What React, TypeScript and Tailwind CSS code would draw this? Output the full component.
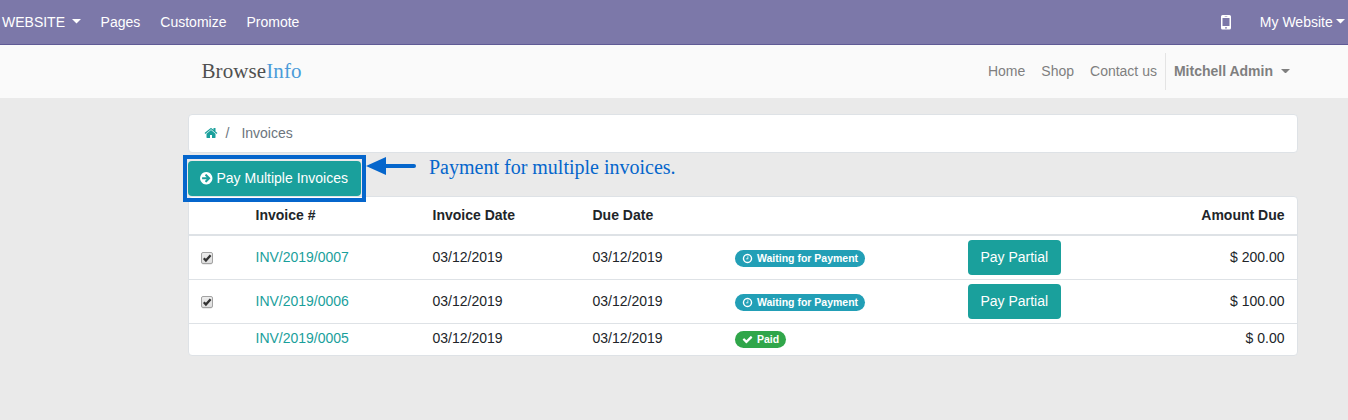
import React from "react";

const PATHS = {
  home: "M1472 992v480q0 26-19 45t-45 19h-384v-384h-256v384h-384q-26 0-45-19t-19-45v-480q0-1 .5-3t.5-3l575-474 575 474q1 2 1 6zm223-69l-62 74q-8 9-21 11h-3q-13 0-21-7l-692-577-692 577q-12 8-24 7-13-2-21-11l-62-74q-8-10-7-23.5t11-21.5l719-599q32-26 76-26t76 26l244 204v-195q0-14 9-23t23-9h192q14 0 23 9t9 23v408l219 182q10 8 11 21.5t-7 23.5z",
  arrow: "M1413 896q0-27-18-45l-91-91-362-362q-18-18-45-18t-45 18l-91 91q-18 18-18 45t18 45l189 189h-502q-26 0-45 19t-19 45v128q0 26 19 45t45 19h502l-189 189q-18 18-18 45t18 45l91 91q18 18 45 18t45-18l362-362 91-91q18-18 18-45zm251 0q0 209-103 385.5t-279.5 279.5-385.5 103-385.5-103-279.5-279.5-103-385.5 103-385.5 279.5-279.5 385.5-103 385.5 103 279.5 279.5 103 385.5z",
  clock: "M1024 544v448q0 14-9 23t-23 9h-320q-14 0-23-9t-9-23v-64q0-14 9-23t23-9h224v-352q0-14 9-23t23-9h64q14 0 23 9t9 23zm416 352q0-148-73-273t-198-198-273-73-273 73-198 198-73 273 73 273 198 198 273 73 273-73 198-198 73-273zm224 0q0 209-103 385.5t-279.5 279.5-385.5 103-385.5-103-279.5-279.5-103-385.5 103-385.5 279.5-279.5 385.5-103 385.5 103 279.5 279.5 103 385.5z",
  check: "M1671 566q0 40-28 68l-724 724-136 136q-28 28-68 28t-68-28l-136-136-362-362q-28-28-28-68t28-68l136-136q28-28 68-28t68 28l294 295 656-657q28-28 68-28t68 28l136 136q28 28 28 68z",
};

function Icon({ name, className }: { name: keyof typeof PATHS; className: string }) {
  return (
    <svg viewBox="0 0 1792 1792" fill="currentColor" className={`shrink-0 ${className}`}>
      <path d={PATHS[name]} />
    </svg>
  );
}

function Caret({ className = "" }: { className?: string }) {
  return (
    <svg viewBox="0 0 9 4.5" fill="currentColor" className={`mb-[1.5px] h-[4.5px] w-[9px] shrink-0 ${className}`}>
      <path d="M0 0h9L4.5 4.5z" />
    </svg>
  );
}

function Checkbox() {
  return (
    <svg viewBox="0 0 13 14" className="mt-[3px] h-[14px] w-[13px]">
      <defs>
        <linearGradient id="box" x1="0" y1="0" x2="0" y2="1">
          <stop offset="0" stopColor="#ededed" />
          <stop offset="1" stopColor="#dedede" />
        </linearGradient>
      </defs>
      <rect x="0.5" y="1.2" width="11" height="11" rx="2" fill="none" stroke="#000" strokeOpacity="0.12" />
      <rect x="0.5" y="0.5" width="11" height="11" rx="1.5" fill="url(#box)" stroke="#a3a3a3" />
      <path d="M2.8 6.3L4.9 8.6L9.6 3.2" fill="none" stroke="#333" strokeWidth="2.3" />
    </svg>
  );
}

const GRID = "grid grid-cols-[54.5px_177px_160px_142.5px_233px_1fr_140px]";

type Invoice = { id: string; amount: string; paid?: boolean };

const INVOICES: Invoice[] = [
  { id: "INV/2019/0007", amount: "$ 200.00" },
  { id: "INV/2019/0006", amount: "$ 100.00" },
  { id: "INV/2019/0005", amount: "$ 0.00", paid: true },
];

function Row({ id, amount, paid }: Invoice) {
  return (
    <div className={`${GRID} items-center ${paid ? "h-[31px] pb-[2px]" : "h-[44px] border-b border-[#dee2e6]"}`}>
      <div className="pl-3">{!paid && <Checkbox />}</div>
      <div className="pl-3 text-[#1aa09c]">{id}</div>
      <div className="pl-3">03/12/2019</div>
      <div className="pl-3">03/12/2019</div>
      <div className="flex pl-3">
        <span
          className={`mt-[2px] flex h-[17px] items-center gap-[4px] rounded-full pl-[7px] pr-[6.5px] text-[10.5px] font-bold text-white ${
            paid ? "bg-[#30a64a]" : "bg-[#229fb6]"
          }`}
        >
          <Icon name={paid ? "check" : "clock"} className="size-[11px]" />
          {paid ? "Paid" : "Waiting for Payment"}
        </span>
      </div>
      <div className="pl-3">
        {!paid && (
          <button className="block h-[35px] w-[93px] rounded-[4px] bg-[#1aa09c] pr-[0.5px] text-center text-white">Pay Partial</button>
        )}
      </div>
      <div className="pr-[12.5px] text-right">{amount}</div>
    </div>
  );
}

export default function App() {
  return (
    <div className="h-[420px] w-[1348px] overflow-hidden bg-[#eaeaea] font-['Liberation_Sans',Arial,sans-serif] text-[14px] leading-[21px] text-[#212529]">
      <nav className="flex h-[45px] items-center border-b border-[#5f5a95] bg-[#7c78a9] pl-[2px] text-white">
        <span>WEBSITE</span>
        <Caret className="ml-[7px]" />
        <span className="ml-[19.6px]">Pages</span>
        <span className="ml-[20px]">Customize</span>
        <span className="ml-[20px]">Promote</span>
        <svg viewBox="0 0 10 15" className="ml-auto mr-[29px] h-[15px] w-[10px]">
          <path
            fill="currentColor"
            fillRule="evenodd"
            d="M1.6 0h6.8A1.6 1.6 0 0 1 10 1.6v11.3a1.6 1.6 0 0 1-1.6 1.6H1.6A1.6 1.6 0 0 1 0 12.9V1.6A1.6 1.6 0 0 1 1.6 0zM1.5 3v8h7V3zM3.7 1.2v.6h2.6v-.6zM5 11.9a.9.9 0 1 0 0 1.8a.9.9 0 1 0 0-1.8z"
          />
        </svg>
        <span>My Website</span>
        <Caret className="ml-[3.3px] mr-[3px]" />
      </nav>

      <header className="h-[53px] bg-[#fafafa]">
        <div className="ml-[188px] flex h-full w-[1110px] items-center justify-between pl-[13.500px] pr-[8px] text-[#7f7f7f]">
          <span className="-mt-px font-['Liberation_Serif',serif] text-[21px] leading-6 tracking-[0.1px] text-[#505050]">
            Browse<span className="text-[#4b9cd9]">Info</span>
          </span>
          <div className="flex items-center">
            <span>Home</span>
            <span className="ml-4">Shop</span>
            <span className="ml-4">Contact us</span>
            <span className="ml-2 flex h-[37px] items-center border-l border-[#e4e4e4] pl-2 font-bold">
              Mitchell Admin
              <Caret className="ml-[8px]" />
            </span>
          </div>
        </div>
      </header>

      <main className="ml-[188px] w-[1110px] pt-4">
        <div className="flex h-[39px] items-center rounded-[4px] border border-[#dee2e6] bg-white pl-[15px] text-[#6c757d]">
          <Icon name="home" className="mb-px size-[14px] text-[#1aa09c]" />
          <span className="ml-[7.5px]">/</span>
          <span className="ml-[12px]">Invoices</span>
        </div>

        <div className="relative mt-2 flex h-[35px]">
          <button className="flex h-[35px] w-[173px] items-center gap-[3px] rounded-[4px] bg-[#1aa09c] pl-[11px] text-white">
            <Icon name="arrow" className="mb-px size-[14.5px]" />
            Pay Multiple Invoices
          </button>
          <div className="absolute -left-[5px] -top-[6px] z-10 h-[47px] w-[183px] border-4 border-[#0566cc]" />
          <svg viewBox="0 0 50 18" className="absolute left-[178px] -top-[4px] h-[18px] w-[50px]">
            <path d="M0 9L20 0V18z" fill="#0566cc" />
            <path d="M18 9H48" stroke="#0566cc" strokeWidth="4" strokeLinecap="round" />
          </svg>
          <span className="absolute left-[241px] -top-[7px] whitespace-nowrap font-['Liberation_Serif',serif] text-[20px] leading-[26px] text-[#0566cc]">
            Payment for multiple invoices.
          </span>
        </div>

        <section className="overflow-hidden rounded-[4px] border border-[#dee2e6] bg-white">
          <div className={`${GRID} h-[39px] items-center border-b-2 border-[#dee2e6] font-bold`}>
            <div />
            <div className="pl-3">Invoice #</div>
            <div className="pl-3">Invoice Date</div>
            <div className="pl-3">Due Date</div>
            <div />
            <div />
            <div className="pr-[12.5px] text-right">Amount Due</div>
          </div>
          {INVOICES.map((invoice) => (
            <Row key={invoice.id} {...invoice} />
          ))}
        </section>
      </main>
    </div>
  );
}
